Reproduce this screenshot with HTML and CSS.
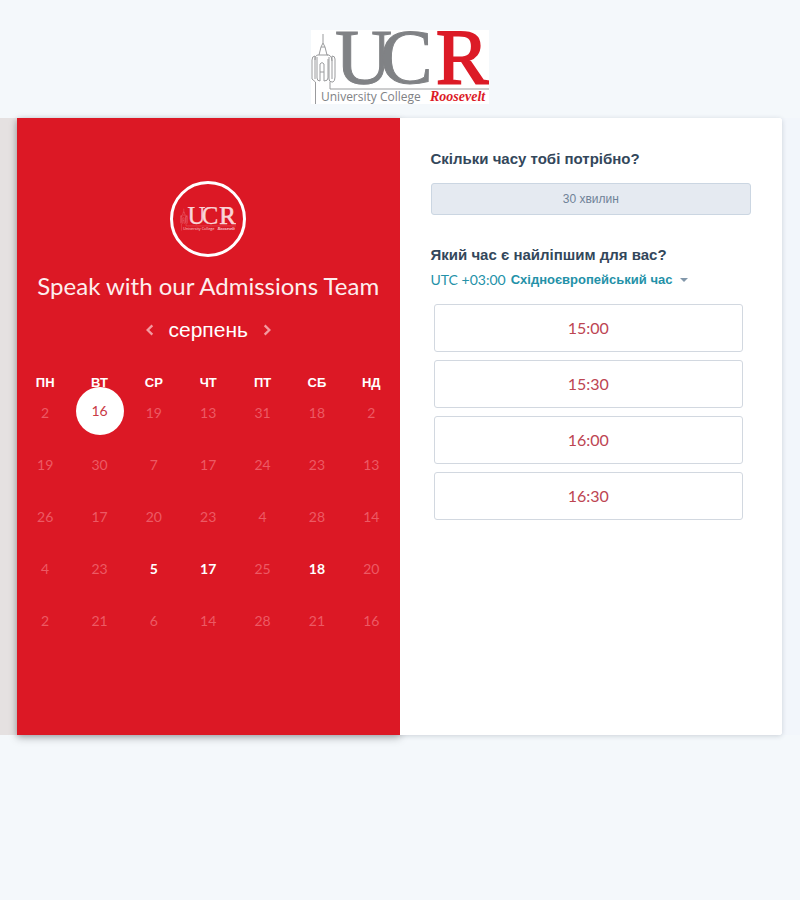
FILE: index.html
```html
<!DOCTYPE html>
<html lang="uk">
<head>
<meta charset="utf-8">
<meta name="viewport" content="width=device-width, initial-scale=1">
<title>Speak with our Admissions Team</title>
<link rel="stylesheet" href="styles.css">
</head>
<body>
<header class="brand">
  <svg class="brand-logo" viewBox="0 0 178 74" role="img" aria-label="University College Roosevelt">
    <defs>
      <g id="ucr">
        <path class="logo-line" d="M4.500 74V52L1 49V30Q1 26 4 26V49M4 30Q4 25 7 25H8L10 17L12 13V4M12 13L14 17L16 25H18Q21 26 21 31M6 27V48Q6 51 9 51V34Q11 31 13 34V51Q17 51 17 48V29M8 25H17M18 27V49Q18 52 21 52H22Q24 51 24 47V29Q24 26 21 26V49M19 52V59H178M9 42H13M10 17H14"/>
        <text class="logo-gray" x="24" y="53" font-size="79">U</text>
        <text class="logo-gray" x="69" y="53" font-size="79">C</text>
        <text class="logo-red" x="125" y="53" font-size="79">R</text>
        <text class="logo-name" x="10" y="71" font-size="12">University College</text>
        <text class="logo-script" x="119" y="71" font-size="14">Roosevelt</text>
      </g>
    </defs>
    <use href="#ucr"/>
  </svg>
</header>

<main class="stage">
  <div class="card">
    <section class="calendar">
      <div class="avatar">
        <svg class="avatar-logo" viewBox="0 0 178 74" aria-hidden="true"><use href="#ucr"/></svg>
      </div>
      <h1 class="title">Speak with our Admissions Team</h1>
      <div class="month">
        <button class="arrow" type="button" aria-label="Попередній місяць"><svg viewBox="0 0 8 12"><path d="M6 2L2 6L6 10"/></svg></button>
        <h2 class="month-name">серпень</h2>
        <button class="arrow" type="button" aria-label="Наступний місяць"><svg viewBox="0 0 8 12"><path d="M2 2L6 6L2 10"/></svg></button>
      </div>
      <table class="days">
        <thead>
          <tr><th>ПН</th><th>ВТ</th><th>СР</th><th>ЧТ</th><th>ПТ</th><th>СБ</th><th>НД</th></tr>
        </thead>
        <tbody>
          <tr><td>2</td><td class="picked"><button class="day selected" type="button">16</button></td><td>19</td><td>13</td><td>31</td><td>18</td><td>2</td></tr>
          <tr><td>19</td><td>30</td><td>7</td><td>17</td><td>24</td><td>23</td><td>13</td></tr>
          <tr><td>26</td><td>17</td><td>20</td><td>23</td><td>4</td><td>28</td><td>14</td></tr>
          <tr><td>4</td><td>23</td><td><button class="day" type="button">5</button></td><td><button class="day" type="button">17</button></td><td>25</td><td><button class="day" type="button">18</button></td><td>20</td></tr>
          <tr><td>2</td><td>21</td><td>6</td><td>14</td><td>28</td><td>21</td><td>16</td></tr>
        </tbody>
      </table>
    </section>

    <section class="booking">
      <h2 class="question">Скільки часу тобі потрібно?</h2>
      <button class="duration" type="button">30 хвилин</button>
      <h2 class="question">Який час є найліпшим для вас?</h2>
      <button class="timezone" type="button" aria-haspopup="listbox"><span class="offset">UTC +03:00</span> <b>Східноєвропейський час</b><span class="caret"></span></button>
      <div class="slots">
        <button class="slot" type="button">15:00</button>
        <button class="slot" type="button">15:30</button>
        <button class="slot" type="button">16:00</button>
        <button class="slot" type="button">16:30</button>
      </div>
    </section>
  </div>
</main>
</body>
</html>
```
FILE: styles.css
```css
* {
  box-sizing: border-box;
}

body {
  min-height: 100vh;
  margin: 0;
  background: #f4f8fb;
  font-family: "Liberation Sans", Arial, sans-serif;
  color: #33475b;
}

h1,
h2 {
  margin: 0;
}

button {
  margin: 0;
  padding: 0;
  border: 0;
  background: none;
  color: inherit;
  font: inherit;
  cursor: pointer;
}

.brand {
  display: flex;
  justify-content: center;
  padding: 30px 0 14px;
}

.brand-logo {
  --gray: #808285;
  --red: #dc1b27;
  --line: #9a9b9d;
  width: 178px;
  height: 74px;
  background: #fff;
}

.logo-line {
  fill: none;
  stroke: var(--line);
  stroke-width: 1;
}

.logo-gray,
.logo-red,
.logo-script {
  font-family: "Liberation Serif", serif;
}

.logo-gray {
  fill: var(--gray);
  stroke: var(--gray);
  stroke-width: 1;
}

.logo-red {
  stroke: var(--red);
  stroke-width: 2;
}

.logo-red,
.logo-script {
  fill: var(--red);
}

.logo-script {
  font-style: italic;
  font-weight: 700;
}

.logo-name {
  fill: var(--gray);
  font-family: "Open Sans", sans-serif;
}

.stage {
  padding: 0 18px 0 17px;
  background: linear-gradient(90deg, #e5e1e1 50%, #f2f6fb 50%);
}

.card {
  position: relative;
  display: grid;
  grid-template-columns: 1fr 1fr;
  min-height: 617px;
  border-radius: 3px;
  background: #fff;
  box-shadow: 0 1px 5px rgba(45, 62, 80, 0.2);
}

.calendar {
  padding: 63px 1px 50px;
  background: #dc1825;
  color: #fff;
  text-align: center;
  box-shadow: 0 3px 8px rgba(0, 0, 0, 0.25);
}

.avatar {
  display: flex;
  align-items: center;
  justify-content: center;
  width: 76px;
  height: 76px;
  margin: 0 auto;
  border: 3px solid #fff;
  border-radius: 50%;
}

.avatar-logo {
  --gray: #f9d5d8;
  --red: #f9d5d8;
  --line: #ee8c93;
  width: 56px;
  height: 24px;
}

.title {
  margin-top: 14px;
  color: #fdeeee;
  font: 400 24px/30px Lato, sans-serif;
}

.month {
  display: flex;
  align-items: center;
  justify-content: center;
  gap: 14px;
  margin-top: 15px;
}

.month-name {
  font-size: 21px;
  font-weight: 400;
  line-height: 28px;
}

.arrow {
  width: 10px;
  height: 16px;
}

.arrow svg {
  display: block;
  width: 10px;
  height: 14px;
  fill: none;
  stroke: #f39aa0;
  stroke-width: 2;
}

.days {
  width: 100%;
  margin-top: 35px;
  border-collapse: collapse;
  table-layout: fixed;
}

.days th {
  padding: 0;
  font-size: 13px;
  line-height: 8px;
}

.days td {
  height: 52px;
  padding: 0;
  color: #ec5a64;
  font: 400 14px/20px Lato, sans-serif;
}

.days .picked {
  vertical-align: top;
}

.day {
  display: block;
  margin: 0 auto;
  color: #fff;
  font-weight: 700;
}

.day.selected {
  width: 48px;
  height: 48px;
  border-radius: 50%;
  background: #fff;
  color: #c93a46;
  font-weight: 400;
}

.booking {
  position: relative;
  padding: 31px;
  border-radius: 0 3px 3px 0;
  background: #fff;
}

.question {
  font-size: 15px;
  line-height: 20px;
}

.duration {
  display: block;
  width: 100%;
  height: 32px;
  margin: 14px 0 30px;
  border: 1px solid #cbd6e2;
  border-radius: 3px;
  background: #e5eaf1;
  color: #708398;
  font-size: 12px;
}

.timezone {
  display: flex;
  align-items: center;
  gap: 5px;
  margin-top: 5px;
  color: #2491a8;
  font-size: 13px;
  line-height: 20px;
  white-space: nowrap;
}

.offset {
  font-family: Lato, sans-serif;
  font-size: 14px;
}

.caret {
  margin-left: 3px;
  border: 4px solid transparent;
  border-top-color: #8297aa;
  border-bottom: 0;
}

.slots {
  display: grid;
  gap: 8px;
  margin: 14px 8px 0 3px;
}

.slot {
  height: 48px;
  border: 1px solid #d2d8e0;
  border-radius: 3px;
  color: #bd4552;
  font: 400 16px/20px Lato, sans-serif;
}
```
